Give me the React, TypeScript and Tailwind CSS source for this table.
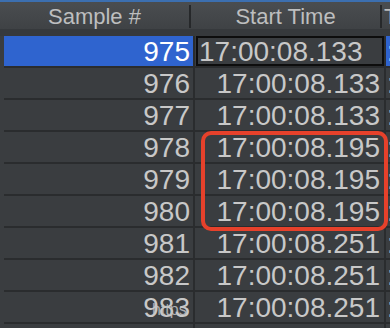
import React from "react";

type Row = { n: number; t: string };

const rows: Row[] = [
  { n: 975, t: "17:00:08.133" },
  { n: 976, t: "17:00:08.133" },
  { n: 977, t: "17:00:08.133" },
  { n: 978, t: "17:00:08.195" },
  { n: 979, t: "17:00:08.195" },
  { n: 980, t: "17:00:08.195" },
  { n: 981, t: "17:00:08.251" },
  { n: 982, t: "17:00:08.251" },
  { n: 983, t: "17:00:08.251" },
  { n: 984, t: "17:00:08.251" },
];

export default function App() {
  return (
    <div
      className="relative w-[390px] h-[328px] overflow-hidden bg-[#3a3d40] text-[#c8c8c8]"
      style={{ fontFamily: '"Liberation Sans", Arial, sans-serif' }}
    >
      {/* window accent strip */}
      <div className="h-[2px] bg-[#3c6fb0]" />

      {/* column header */}
      <div className="flex h-[27px] bg-gradient-to-b from-[#4a4d50] to-[#3f4245] text-[22px] leading-[30px] text-[#bdbebf]">
        <div className="w-[189px] shrink-0 text-center">Sample #</div>
        <div className="w-[2px] shrink-0 mt-[3px] mb-[1px] bg-[#26282a]" />
        <div className="w-[189px] shrink-0 text-center">Start Time</div>
        <div className="w-[2px] shrink-0 mt-[3px] mb-[1px] bg-[#26282a]" />
        <div className="pl-[2px] whitespace-nowrap">Time</div>
      </div>
      <div className="h-[7px] bg-[#36393c]" />

      {/* table body */}
      <div className="pl-[4px]">
        {rows.map((r, i) => {
          const sel = i === 0;
          return (
            <div key={r.n} className="flex h-[32px] border-b-2 border-[#2a2c2e] text-[28px] leading-[31px]">
              <div
                className={
                  "w-[189px] shrink-0 text-right pr-[3px] " +
                  (sel ? "bg-[#2f64cf] text-white" : "")
                }
              >
                {r.n}
              </div>
              <div className="w-[2px] shrink-0 bg-[#2a2c2e]" />
              <div className="w-[189px] shrink-0">
                {sel ? (
                  <div className="ml-[1px] h-full border-2 border-[#0d0d0d] pl-[1px] leading-[27px] whitespace-nowrap overflow-hidden">
                    {r.t}
                  </div>
                ) : (
                  <div className="text-right pr-[4px] whitespace-nowrap">{r.t}</div>
                )}
              </div>
              <div className="w-[2px] shrink-0 bg-[#2a2c2e]" />
              <div
                className={
                  "flex-1 overflow-hidden whitespace-nowrap pl-[1px] " +
                  (sel ? "bg-[#2f64cf] text-white" : "")
                }
              >
                :
              </div>
            </div>
          );
        })}
      </div>

      {/* highlight annotation */}
      <div className="absolute left-[201px] top-[131px] w-[187px] h-[100px] rounded-[10px] border-[4px] border-[#e6412b]" />

      {/* overlay label */}
      <div className="absolute left-[152px] top-[301px] text-[16px] leading-[18px] text-[#c4c4c4]/85">
        https
      </div>
    </div>
  );
}
